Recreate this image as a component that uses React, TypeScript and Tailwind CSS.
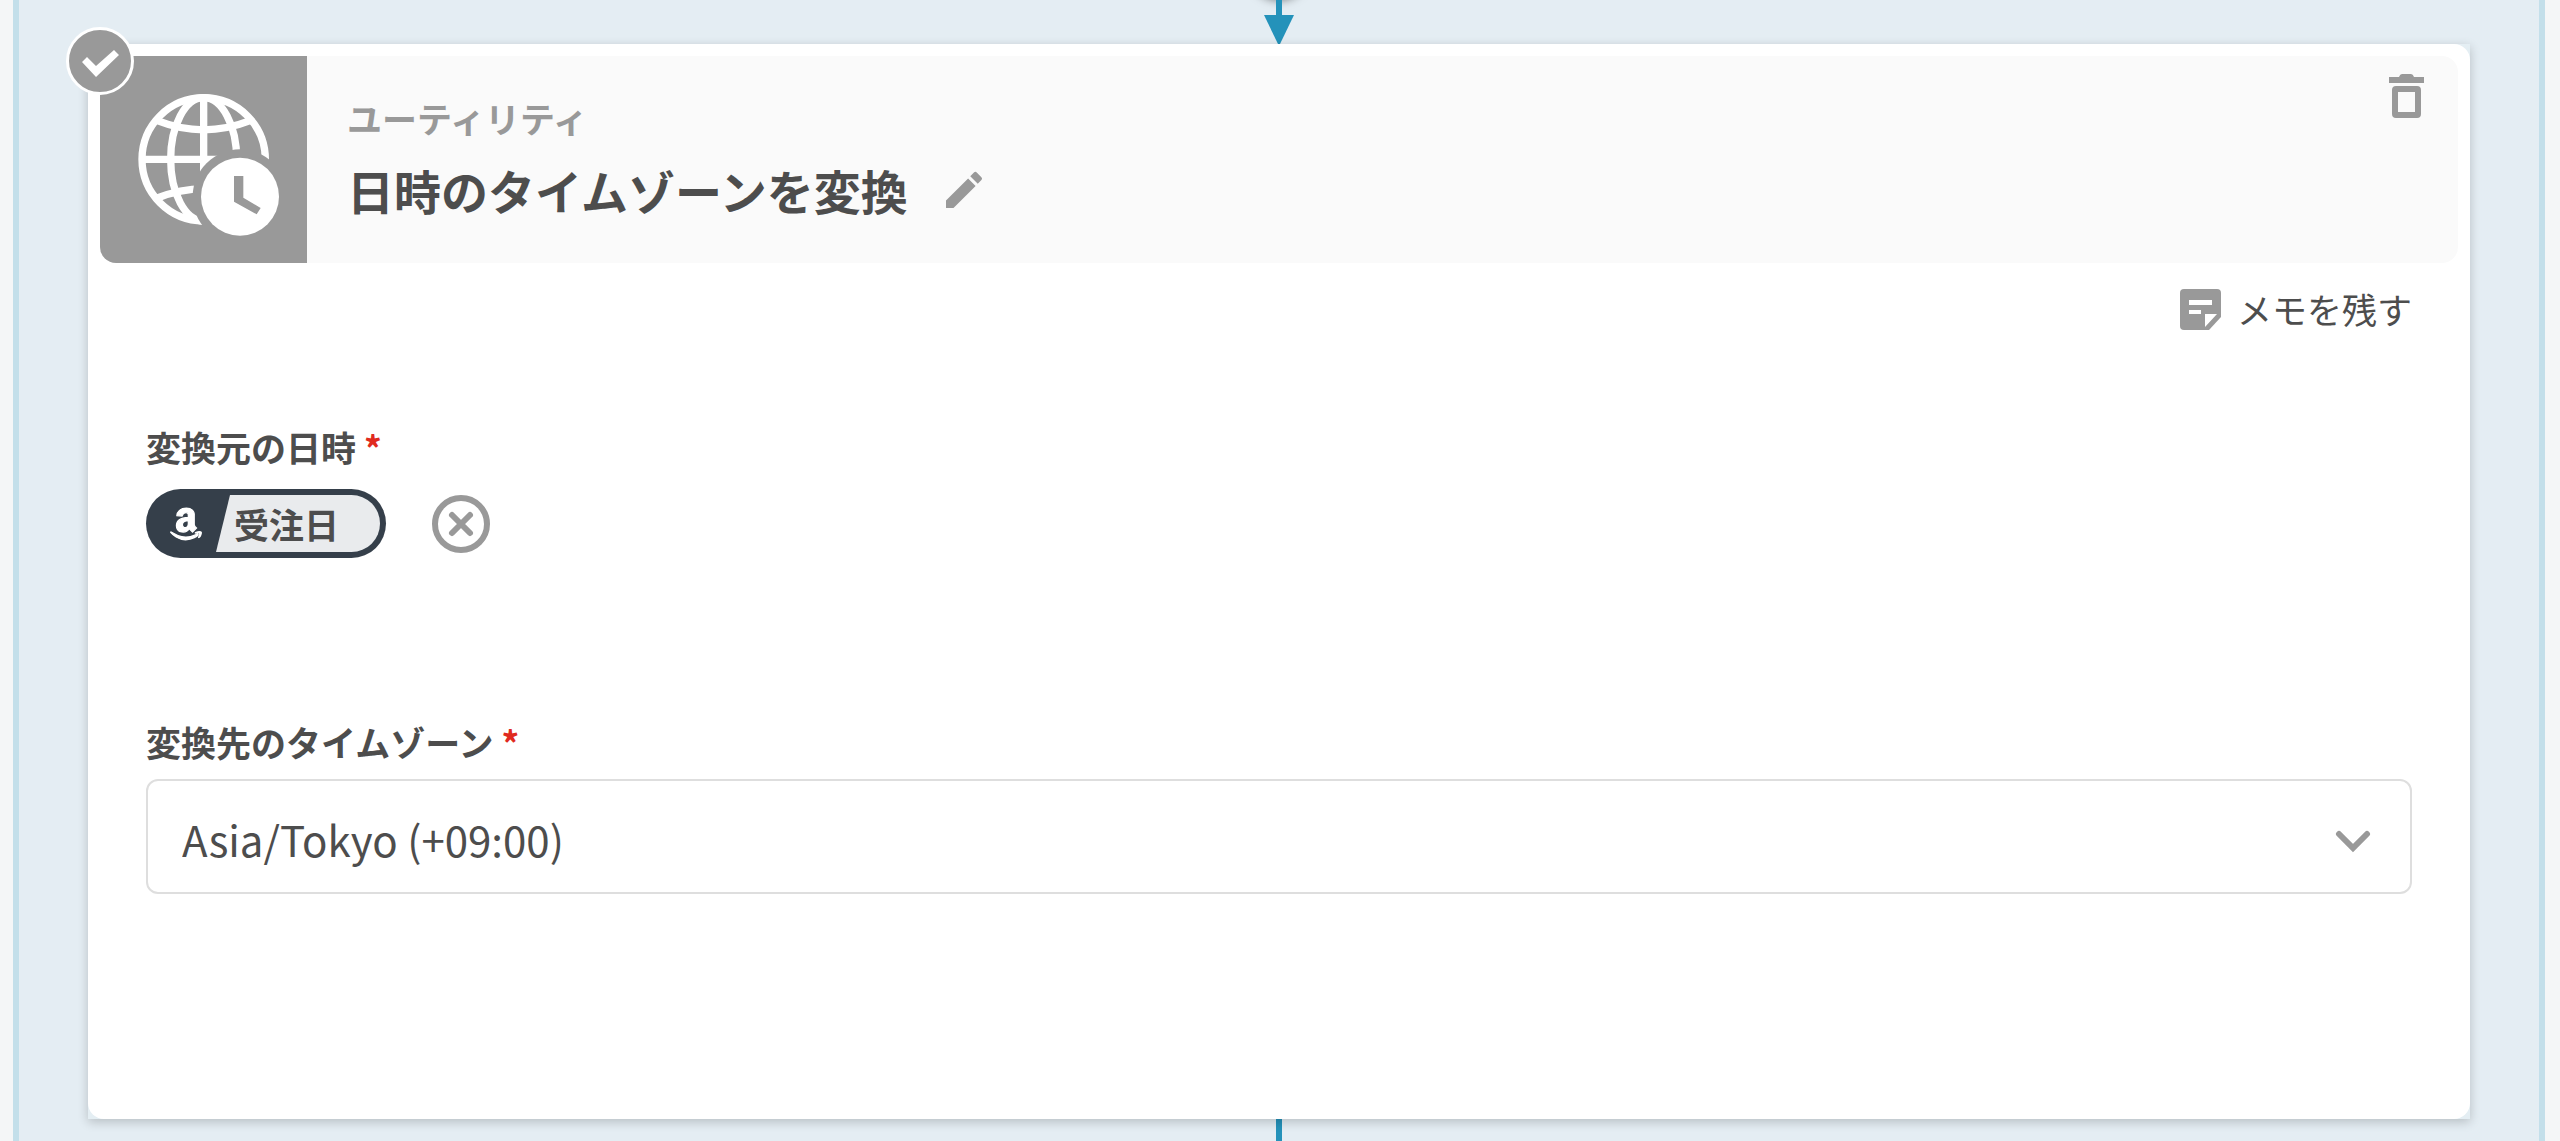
import { FaAmazon } from "react-icons/fa";
import { MdEdit } from "react-icons/md";

const TIMEZONES = ["Asia/Tokyo (+09:00)", "America/New_York (-05:00)", "Europe/London (+00:00)", "UTC (+00:00)"];

function TimezoneIcon() {
  return (
    <svg viewBox="0 0 621 621" className="size-full" fill="none" aria-hidden="true">
      <mask id="clock-cut">
        <rect width="621" height="621" fill="white" />
        <circle cx="420" cy="422" r="142" fill="black" />
      </mask>
      <g mask="url(#clock-cut)" stroke="white" strokeWidth="22">
        <circle cx="311" cy="310" r="185" />
        <ellipse cx="311" cy="310" rx="99" ry="185" />
        <path d="M311 125v370M126 310h370" />
        <path d="M172 194Q311 249 450 194M172 426Q311 371 450 426" />
      </g>
      <circle cx="420" cy="422" r="117" fill="white" />
      <path d="M402 360h28v65l52 31-12 19-68-38z" fill="#999999" />
    </svg>
  );
}

function TrashIcon() {
  return (
    <svg viewBox="0 0 35 45" className="h-[45px] w-[35px]" aria-hidden="true">
      <path d="M10 3Q11 0 13 0h9q2 0 3 3h10v6H0V3z" fill="#999999" />
      <rect x="6" y="15" width="23" height="26" rx="1" fill="none" stroke="#999999" strokeWidth="6" />
    </svg>
  );
}

function NoteIcon() {
  return (
    <svg viewBox="0 0 41 41" className="size-[41px]" aria-hidden="true">
      <path d="M4 0h33q4 0 4 4v24L29 41H4q-4 0-4-4V4q0-4 4-4z" fill="#999999" />
      <path d="M9 11h23v5H9zM9 21h12v4H9zM25 25h12L25 38z" fill="white" />
    </svg>
  );
}

function Header() {
  return (
    <header className="flex overflow-hidden rounded-2xl bg-[#fafafa]">
      <div className="size-[207px] shrink-0 bg-[#999999]">
        <TimezoneIcon />
      </div>

      <div className="flex grow flex-col justify-center gap-3 pb-1 pl-10">
        <p className="text-[35px] leading-[52px] font-bold text-[#999999]">ユーティリティ</p>
        <div className="flex items-center gap-8">
          <h2 className="text-[47px] leading-[68px] font-bold text-[#4d4d4d]">
            日時のタイムゾーンを変換
          </h2>
          <button type="button" aria-label="名前を編集" className="text-[#999999]">
            <MdEdit className="size-12" />
          </button>
        </div>
      </div>

      <button type="button" aria-label="削除" className="mt-[18px] mr-[34px] self-start">
        <TrashIcon />
      </button>
    </header>
  );
}

function Required() {
  return <span className="ml-2 text-[#e02a20]">*</span>;
}

function DateChip() {
  return (
    <div className="flex h-[69px] w-60 items-center overflow-hidden rounded-full bg-[#353f4a] p-[6px]">
      <FaAmazon
        className="ml-4 size-9 shrink-0 overflow-visible stroke-white stroke-[18px] text-white"
        aria-hidden="true"
      />
      <div className="ml-3 flex h-full grow items-center rounded-r-full bg-[#e9ebed] pl-[18px] [clip-path:polygon(14px_0,100%_0,100%_100%,0_100%)]">
        <span className="text-[35px] leading-[52px] font-bold">受注日</span>
      </div>
    </div>
  );
}

function RemoveButton() {
  return (
    <button type="button" aria-label="受注日を外す">
      <svg viewBox="0 0 58 58" className="size-[58px]" fill="none" stroke="#999999" aria-hidden="true">
        <circle cx="29" cy="29" r="26" strokeWidth="6" />
        <path d="M20 20l18 18M38 20L20 38" strokeWidth="6" strokeLinecap="round" />
      </svg>
    </button>
  );
}

function StepCard() {
  return (
    <section className="relative bg-[#e4eef3] shadow-[0_3px_10px_rgba(0,0,0,0.2)]">
      <div className="rounded-2xl bg-white p-3 pb-[225px]">
        <Header />

        <div className="px-[46px]">
          <div className="flex justify-end pt-[18px]">
            <button type="button" className="flex items-center gap-4 text-[35px] leading-[56px]">
              <NoteIcon />
              メモを残す
            </button>
          </div>

          {/* source date */}
          <div className="pt-[84px]">
            <p className="text-[35px] leading-[52px] font-bold">
              変換元の日時
              <Required />
            </p>
            <div className="mt-4 flex items-center gap-[46px]">
              <DateChip />
              <RemoveButton />
            </div>
          </div>

          {/* target timezone */}
          <div className="pt-[158px]">
            <label htmlFor="timezone" className="block text-[35px] leading-[52px] font-bold">
              変換先のタイムゾーン
              <Required />
            </label>
            <div className="relative mt-[11px]">
              <select
                id="timezone"
                className="block h-[115px] w-full appearance-none rounded-xl border-2 border-[#dedede] bg-white px-[34px] pt-1 text-[42px]"
              >
                {TIMEZONES.map((zone) => (
                  <option key={zone}>{zone}</option>
                ))}
              </select>
              <svg
                viewBox="0 0 36 24"
                className="pointer-events-none absolute top-[51px] right-[41px] h-6 w-9"
                fill="none"
                stroke="#999999"
                strokeWidth="6"
                strokeLinecap="round"
                aria-hidden="true"
              >
                <path d="M4 4l14 14L32 4" />
              </svg>
            </div>
          </div>
        </div>
      </div>

      {/* done badge */}
      <div className="absolute -top-[17px] -left-[22px] size-[68px] rounded-full border-[3px] border-white bg-[#999999]">
        <svg viewBox="0 0 62 62" className="size-full" fill="white" aria-hidden="true">
          <path d="M13 32l5-5 9 9 18-16 5 5-23 22z" />
        </svg>
      </div>
    </section>
  );
}

export default function App() {
  return (
    <div className="min-h-screen bg-[#f4f6f7] pr-[15px] pl-[13px] font-['Noto_Sans_CJK_JP','Noto_Sans',sans-serif] text-[#4d4d4d]">
      <main className="flex min-h-screen flex-col border-x-[6px] border-[#c3dfea] bg-[#e4edf3] px-[69px]">
        <div className="relative flex flex-col items-center overflow-hidden">
          <div className="absolute -top-[60px] size-[60px] rounded-full shadow-[0_0_10px_rgba(0,0,0,0.5)]" />
          <div className="relative h-[15px] w-[6px] bg-[#2492ba]" />
          <svg viewBox="0 0 30 29" className="relative h-[29px] w-[30px]" fill="#2492ba" aria-hidden="true">
            <path d="M0 0h30L16 29h-2z" />
          </svg>
        </div>

        <StepCard />

        <div className="w-[6px] grow self-center bg-[#2492ba]" />
      </main>
    </div>
  );
}
